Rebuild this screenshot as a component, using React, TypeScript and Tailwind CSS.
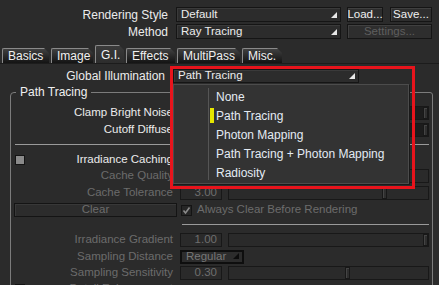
import React from "react";

const ff = { fontFamily: '"Liberation Sans", Arial, sans-serif' };

function Arrow({ dark }: { dark?: boolean }) {
  return (
    <svg width="6" height="6" viewBox="0 0 6 6" className="absolute right-[3px] bottom-[3px]">
      <polygon points="6,0 6,6 0,6" fill={dark ? "#0c0c0c" : "#e8e8e8"} />
    </svg>
  );
}

function Dropdown({ value, w, disabled, dark }: { value: string; w: string; disabled?: boolean; dark?: boolean }) {
  return (
    <div
      className={`relative h-full ${w} ${dark ? "border-2 border-[#0e0e0e]" : "border border-[#151515] shadow-[inset_1px_1px_0_#3a3a3a]"} bg-[#2c2c2c] flex items-center pl-[4px] ${disabled ? "text-[#777]" : "text-[#ececec]"}`}
    >
      {value}
      <Arrow dark={dark} />
    </div>
  );
}

function Button({ label, w, disabled }: { label: string; w: string; disabled?: boolean }) {
  return (
    <div
      className={`h-full ${w} border border-[#151515] bg-[#2e2e2e] shadow-[inset_1px_1px_0_#404040] flex items-center justify-center ${disabled ? "text-[#5e5e5e]" : "text-[#f0f0f0]"}`}
    >
      {label}
    </div>
  );
}

function Tab({ label, w, active }: { label: string; w: string; active?: boolean }) {
  return (
    <div
      className={`${w} ${active ? "h-[18px] bg-gradient-to-b from-[#3a3a3a] to-[#2d2d2d] text-[#f4f4f4]" : "h-[15px] bg-gradient-to-b from-[#404040] to-[#141414] text-[#f0f0f0]"} border-t border-l border-[#8a8a8a] rounded-tl-[2px] flex items-center pl-[5px] text-[12px] [clip-path:polygon(0_0,calc(100%-5px)_0,100%_5px,100%_100%,0_100%)]`}
    >
      {label}
    </div>
  );
}

function Slider({ pos, dark }: { pos: number; dark?: boolean }) {
  return (
    <div className={`relative h-full w-[201px] border border-[#181818] ${dark ? "bg-[#1c1c1c]" : "bg-[#2a2a2a]"}`}>
      <div
        className="absolute top-0 bottom-0 w-[5px] border border-[#181818] bg-[#2e2e2e] shadow-[inset_1px_1px_0_#444]"
        style={{ left: `calc(${pos}% - ${pos * 0.05}px)` }}
      />
    </div>
  );
}

function Field({ value, dark }: { value: string; dark?: boolean }) {
  return (
    <div
      className={`h-full w-[42px] border border-[#181818] ${dark ? "bg-[#1c1c1c] text-[#e6e6e6]" : "bg-[#2a2a2a] text-[#6e6e6e]"} flex items-center justify-end pr-[4px]`}
    >
      {value}
    </div>
  );
}

function Row({ label, disabled, children }: { label: string; disabled?: boolean; children?: React.ReactNode }) {
  return (
    <div className="flex h-[14px] items-center">
      <div className={`w-[162px] text-right ${disabled ? "text-[#6c6c6c]" : "text-[#ececec]"}`}>{label}</div>
      <div className="ml-[7px] flex h-full gap-[6px]">{children}</div>
    </div>
  );
}

export default function App() {
  const items = ["None", "Path Tracing", "Photon Mapping", "Path Tracing + Photon Mapping", "Radiosity"];

  return (
    <div className="relative w-[439px] h-[285px] overflow-hidden bg-[#2b2b2b] text-[11.5px] leading-none text-[#ececec]" style={ff}>
      {/* header */}
      <div className="pt-[7px] flex flex-col gap-[2px]">
        <div className="flex h-[15px] items-center">
          <div className="w-[168px] text-right text-[12px]">Rendering Style</div>
          <div className="ml-[8px] h-full">
            <Dropdown value="Default" w="w-[165px]" />
          </div>
          <div className="ml-[6px] h-full">
            <Button label="Load..." w="w-[36px]" />
          </div>
          <div className="ml-[7px] h-full">
            <Button label="Save..." w="w-[42px]" />
          </div>
        </div>
        <div className="flex h-[15px] items-center">
          <div className="w-[168px] text-right text-[12px]">Method</div>
          <div className="ml-[8px] h-full">
            <Dropdown value="Ray Tracing" w="w-[165px]" />
          </div>
          <div className="ml-[6px] h-full">
            <Button label="Settings..." w="w-[85px]" disabled />
          </div>
        </div>
      </div>

      {/* tabs */}
      <div className="mt-[6px] flex h-[18px] items-end pl-[2px] gap-[2px]">
        <Tab label="Basics" w="w-[47px]" />
        <Tab label="Image" w="w-[42px]" />
        <Tab label="G.I." w="w-[29px]" active />
        <Tab label="Effects" w="w-[49px]" />
        <Tab label="MultiPass" w="w-[63px]" />
        <Tab label="Misc." w="w-[40px]" />
      </div>
      <div className="h-px bg-[#1c1c1c]" />

      {/* global illumination */}
      <div className="mt-[5px] flex h-[14px] items-center">
        <div className="w-[165px] text-right text-[12px]">Global Illumination</div>
        <div className="ml-[8px] h-full">
          <Dropdown value="Path Tracing" w="w-[186px]" />
        </div>
      </div>

      {/* group */}
      <fieldset className="mt-[3px] ml-[10px] w-[423px] h-[220px] border border-[#7c7c7c] rounded-tl-[4px] rounded-tr-[3px]">
        <legend className="ml-[5px] px-[4px] text-[12px] text-[#f0f0f0] leading-[13px]">Path Tracing</legend>
        <div className="mt-[7px] flex flex-col">
          <Row label="Clamp Bright Noise">
            <Field value="" dark />
            <Slider pos={100} dark />
          </Row>
          <div className="mt-[3px]">
            <Row label="Cutoff Diffuse">
              <Field value="" dark />
              <Slider pos={100} dark />
            </Row>
          </div>
          <div className="mt-[7px] ml-[4px] mr-[3px] h-px bg-[#9a9a9a]" />
          <div className="mt-[8px] flex h-[14px] items-center">
            <div className="ml-[4px] w-[10px] h-[10px] bg-[#8a8a8a] border border-[#141414]" />
            <div className="w-[148px] text-right text-[#ececec]">Irradiance Caching</div>
          </div>
          <div className="mt-[2px]">
            <Row label="Cache Quality" disabled>
              <Field value="" />
              <Slider pos={79} />
            </Row>
          </div>
          <div className="mt-[3px]">
            <Row label="Cache Tolerance" disabled>
              <Field value="3.00" />
              <Slider pos={79} />
            </Row>
          </div>
          <div className="mt-[3px] flex h-[14px] items-center">
            <div className="ml-[3px] w-[163px] h-full border border-[#141414] bg-[#2c2c2c] shadow-[inset_1px_1px_0_#383838] flex items-center justify-center text-[#6c6c6c]">
              Clear
            </div>
            <div className="ml-[4px] w-[11px] h-[11px] border border-[#141414] bg-[#262626] flex items-center justify-center">
              <svg width="9" height="9" viewBox="0 0 9 9">
                <path d="M1.5 4.5 L3.5 7 L7.5 1.5" stroke="#8a8a8a" strokeWidth="1.6" fill="none" />
              </svg>
            </div>
            <div className="ml-[5px] text-[#6c6c6c]">Always Clear Before Rendering</div>
          </div>
          <div className="mt-[7px] ml-[171px] mr-[3px] h-px bg-[#9a9a9a]" />
          <div className="mt-[8px]">
            <Row label="Irradiance Gradient" disabled>
              <Field value="1.00" />
              <Slider pos={100} />
            </Row>
          </div>
          <div className="mt-[3px]">
            <Row label="Sampling Distance" disabled>
              <Dropdown value="Regular" w="w-[64px]" disabled dark />
            </Row>
          </div>
          <div className="mt-[2px]">
            <Row label="Sampling Sensitivity" disabled>
              <Field value="0.30" />
              <Slider pos={60} />
            </Row>
          </div>
          <div className="mt-[2px] flex h-[14px] items-center">
            <div className="ml-[4px] w-[10px] h-[10px] border border-[#141414] bg-[#2c2c2c]" />
            <div className="w-[148px] text-right text-[#6c6c6c]">Detail Enhancement</div>
          </div>
        </div>
      </fieldset>

      {/* popup list */}
      <div className="absolute left-[173px] top-[84px] w-[236px] h-[100px] bg-[#333] border border-[#4c4c4c] shadow-[1px_1px_0_#1a1a1a]">
        <div className="absolute left-[34px] top-[3px] bottom-[3px] w-px bg-[#555]" />
        <div className="pt-[2px] pl-[42px] flex flex-col text-[12px] text-[#e4ebf3]">
          {items.map((it, i) => (
            <div key={it} className="relative h-[19px] flex items-center">
              {i === 1 && <div className="absolute left-[-6px] top-[2px] w-[4px] h-[15px] bg-[#e6e600]" />}
              {it}
            </div>
          ))}
        </div>
      </div>

      {/* red highlight */}
      <div className="absolute left-[170px] top-[66px] w-[245px] h-[123px] border-[3px] border-[#e8141c] pointer-events-none" />
    </div>
  );
}
